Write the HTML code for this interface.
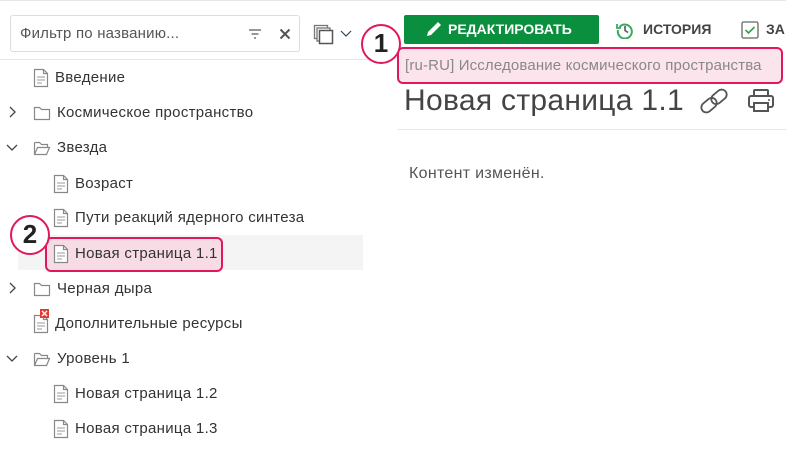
<!DOCTYPE html>
<html><head><meta charset="utf-8">
<style>
*{margin:0;padding:0;box-sizing:border-box}
body{width:786px;height:450px;overflow:hidden;background:#fff;font-family:"Liberation Sans",sans-serif;position:relative;color:#333}
.a{position:absolute}
.row{position:absolute;height:35px;display:flex;align-items:center;font-size:15px;letter-spacing:0.3px;color:#333;white-space:nowrap}
.row svg{margin-right:6px;flex:none}
</style></head><body>
<div class="a" style="left:0;top:0;width:786px;height:1px;background:#e6e6e6"></div>
<div class="a" style="left:10px;top:15px;width:290px;height:37px;border:1px solid #ddd;border-radius:3px"></div>
<div class="a" style="left:20px;top:25px;font-size:15px;color:#555;letter-spacing:0.2px">Фильтр по названию...</div>
<svg class="a" style="left:248px;top:28px" width="14" height="12"><path d="M1 2h12M3.5 6h7M6 10h2" stroke="#777" stroke-width="1.5"/></svg>
<svg class="a" style="left:279px;top:28px" width="12" height="12"><path d="M1.5 1.5l9 9M10.5 1.5l-9 9" stroke="#555" stroke-width="2"/></svg>
<svg class="a" style="left:313px;top:24px" width="24" height="22"><rect x="1.5" y="1.5" width="13" height="13" fill="#fff" stroke="#777" stroke-width="1.3"/><rect x="4" y="4" width="13" height="13" fill="#fff" stroke="#777" stroke-width="1.3"/><rect x="6.5" y="6.5" width="13" height="13" fill="#fff" stroke="#555" stroke-width="1.5"/></svg>
<svg class="a" style="left:340px;top:30px" width="12" height="8"><path d="M1 1l5 5 5-5" stroke="#345" fill="none" stroke-width="1.2"/></svg>
<div class="a" style="left:0;top:59px;width:386px;height:1px;background:#e6e6e6"></div>
<div class="a" style="left:18px;top:235px;width:345px;height:35px;background:#f4f4f4"></div>

<svg width="0" height="0" style="position:absolute">
<defs>
<symbol id="doc" viewBox="0 0 16 20"><path d="M1.5 1.5h9l4 4v13h-13z" fill="#fff" stroke="#888" stroke-width="1.2"/><path d="M10.5 1.5v4h4" fill="none" stroke="#888" stroke-width="1.2"/><path d="M4 9h8M4 12h8M4 15h5" stroke="#999" stroke-width="1.1"/></symbol>
<symbol id="fold" viewBox="0 0 18 16"><path d="M1.5 2.5h5l2 2h8v10h-15z" fill="#fff" stroke="#888" stroke-width="1.2"/></symbol>
<symbol id="ofold" viewBox="0 0 18 16"><path d="M1.5 2.5h5l2 2h6v3M1.5 2.5v12h12l3-7h-12l-3 7" fill="#fff" stroke="#888" stroke-width="1.2"/></symbol>
<symbol id="r" viewBox="0 0 10 12"><path d="M2 1l5 5-5 5" stroke="#444" fill="none" stroke-width="1.3"/></symbol>
<symbol id="d" viewBox="0 0 12 10"><path d="M1 2l5 5 5-5" stroke="#444" fill="none" stroke-width="1.3"/></symbol>
</defs></svg>

<div class="row" style="left:33px;top:60px"><svg width="16" height="20"><use href="#doc"/></svg>Введение</div>
<svg class="a" style="left:8px;top:106px" width="10" height="12"><use href="#r"/></svg>
<div class="row" style="left:33px;top:95px"><svg width="18" height="16"><use href="#fold"/></svg>Космическое пространство</div>
<svg class="a" style="left:6px;top:143px" width="12" height="10"><use href="#d"/></svg>
<div class="row" style="left:33px;top:130px"><svg width="18" height="16"><use href="#ofold"/></svg>Звезда</div>
<div class="row" style="left:53px;top:166px"><svg width="16" height="20"><use href="#doc"/></svg>Возраст</div>
<div class="row" style="left:53px;top:200px"><svg width="16" height="20"><use href="#doc"/></svg>Пути реакций ядерного синтеза</div>
<div class="a" style="left:45px;top:237px;width:178px;height:35px;border:2px solid #e0185c;border-radius:6px;background:#f7dbe5"></div>
<div class="row" style="left:53px;top:236px"><svg width="16" height="20"><use href="#doc"/></svg>Новая страница 1.1</div>
<svg class="a" style="left:8px;top:282px" width="10" height="12"><use href="#r"/></svg>
<div class="row" style="left:33px;top:271px"><svg width="18" height="16"><use href="#fold"/></svg>Черная дыра</div>
<div class="row" style="left:33px;top:306px"><svg width="16" height="20"><use href="#doc"/></svg>Дополнительные ресурсы</div>
<svg class="a" style="left:40px;top:309px" width="9" height="9"><rect width="9" height="9" fill="#e53935"/><path d="M2 2l5 5M7 2l-5 5" stroke="#fff" stroke-width="1.3"/></svg>
<svg class="a" style="left:6px;top:354px" width="12" height="10"><use href="#d"/></svg>
<div class="row" style="left:33px;top:341px"><svg width="18" height="16"><use href="#ofold"/></svg>Уровень 1</div>
<div class="row" style="left:53px;top:376px"><svg width="16" height="20"><use href="#doc"/></svg>Новая страница 1.2</div>
<div class="row" style="left:53px;top:411px"><svg width="16" height="20"><use href="#doc"/></svg>Новая страница 1.3</div>

<div class="a" style="left:10px;top:215px;width:40px;height:40px;border:2.5px solid #e0185c;border-radius:50%;background:#fff;font-size:26px;font-weight:bold;color:#222;text-align:center;line-height:35px">2</div>

<div class="a" style="left:404px;top:15px;width:195px;height:29px;background:#0a8f3e;border-radius:2px;color:#fff;font-weight:bold;font-size:14px;line-height:29px;padding-left:44px">РЕДАКТИРОВАТЬ</div>
<svg class="a" style="left:424px;top:21px" width="18" height="18"><path d="M3 15l1-4 8-8 3 3-8 8z" fill="#fff"/><path d="M12 3l2-2 3 3-2 2z" fill="#fff"/></svg>
<svg class="a" style="left:616px;top:21px" width="18" height="18"><path d="M3.5 6A7 7 0 1 1 2 9" fill="none" stroke="#3aaa5c" stroke-width="2"/><path d="M1 3v4h4" fill="none" stroke="#3aaa5c" stroke-width="1.8"/><path d="M9 5v4.5l3 2" fill="none" stroke="#555" stroke-width="1.6"/></svg>
<div class="a" style="left:643px;top:21px;font-size:14px;font-weight:bold;color:#444">ИСТОРИЯ</div>
<svg class="a" style="left:741px;top:21px" width="18" height="18"><rect x="1" y="1" width="16" height="16" rx="1.5" fill="#fff" stroke="#666" stroke-width="1.3"/><path d="M4.5 9l3 3 6-6" fill="none" stroke="#2ea34f" stroke-width="1.6"/></svg>
<div class="a" style="left:766px;top:21px;font-size:14px;font-weight:bold;color:#444">ЗА</div>

<div class="a" style="left:397px;top:47px;width:386px;height:37px;border:2px solid #e0185c;border-radius:6px;background:#fce4ec"></div>
<div class="a" style="left:405px;top:57px;font-size:15px;color:#888;white-space:nowrap;letter-spacing:0.15px">[ru-RU] Исследование космического пространства</div>
<div class="a" style="left:361px;top:24px;width:40px;height:40px;border:2.5px solid #e0185c;border-radius:50%;background:#fff;font-size:26px;font-weight:bold;color:#222;text-align:center;line-height:35px">1</div>

<div class="a" style="left:404px;top:84px;font-size:30px;color:#444;white-space:nowrap;letter-spacing:0.3px">Новая страница 1.1</div>
<svg class="a" style="left:697px;top:88px" width="34" height="26"><g transform="rotate(-40 17 13)" fill="none" stroke="#555" stroke-width="1.8"><rect x="2" y="8" width="17" height="10" rx="5"/><rect x="15" y="8" width="17" height="10" rx="5"/></g></svg>
<svg class="a" style="left:747px;top:88px" width="28" height="26"><rect x="7" y="2" width="14" height="6" rx="1" fill="none" stroke="#555" stroke-width="2"/><rect x="2" y="8" width="24" height="11" rx="2" fill="none" stroke="#555" stroke-width="2"/><rect x="7" y="15" width="14" height="8" fill="#fff" stroke="#555" stroke-width="2"/><circle cx="22" cy="12" r="1" fill="#555"/></svg>
<div class="a" style="left:398px;top:129px;width:388px;height:1px;background:#e6e6e6"></div>
<div class="a" style="left:409px;top:165px;font-size:16px;color:#555;letter-spacing:0.3px">Контент изменён.</div>
</body></html>
